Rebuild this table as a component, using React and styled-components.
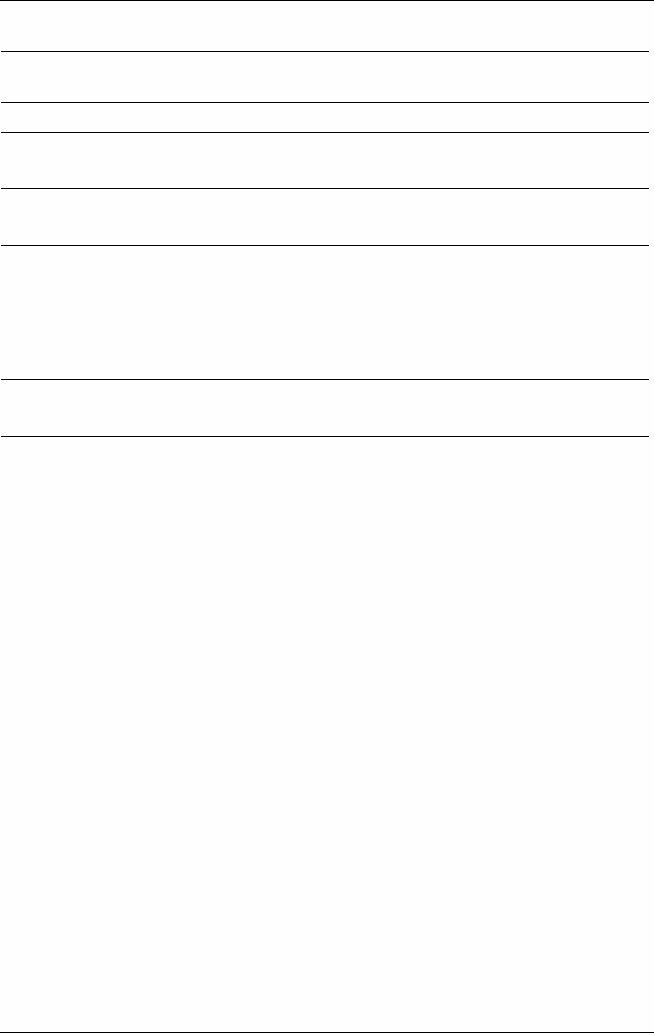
import React from "react";
import styled, { createGlobalStyle } from "styled-components";

const Global = createGlobalStyle`
  html, body { margin: 0; padding: 0; background: #fefefe; }
  body { font-family: "Liberation Sans", Arial, sans-serif; }
`;

const Page = styled.div`
  height: 1034px;
  box-sizing: border-box;
  display: flex;
  flex-direction: column;
  border-top: 1px solid #000;
`;

const List = styled.div`
  display: flex;
  flex-direction: column;
  padding: 0 5px 0 1px;
  flex: 1;
`;

const Row = styled.div`
  height: ${(p) => p.$h}px;
  border-bottom: 1px solid #000;
`;

const Footer = styled.div`
  height: 1px;
  border-top: 1px solid #000;
`;

const rows = [50, 50, 29, 55, 56, 133, 56];

export default function App() {
  return (
    <>
      <Global />
      <Page>
        <List>
          {rows.map((h, i) => (
            <Row key={i} $h={h} />
          ))}
        </List>
        <Footer />
      </Page>
    </>
  );
}
